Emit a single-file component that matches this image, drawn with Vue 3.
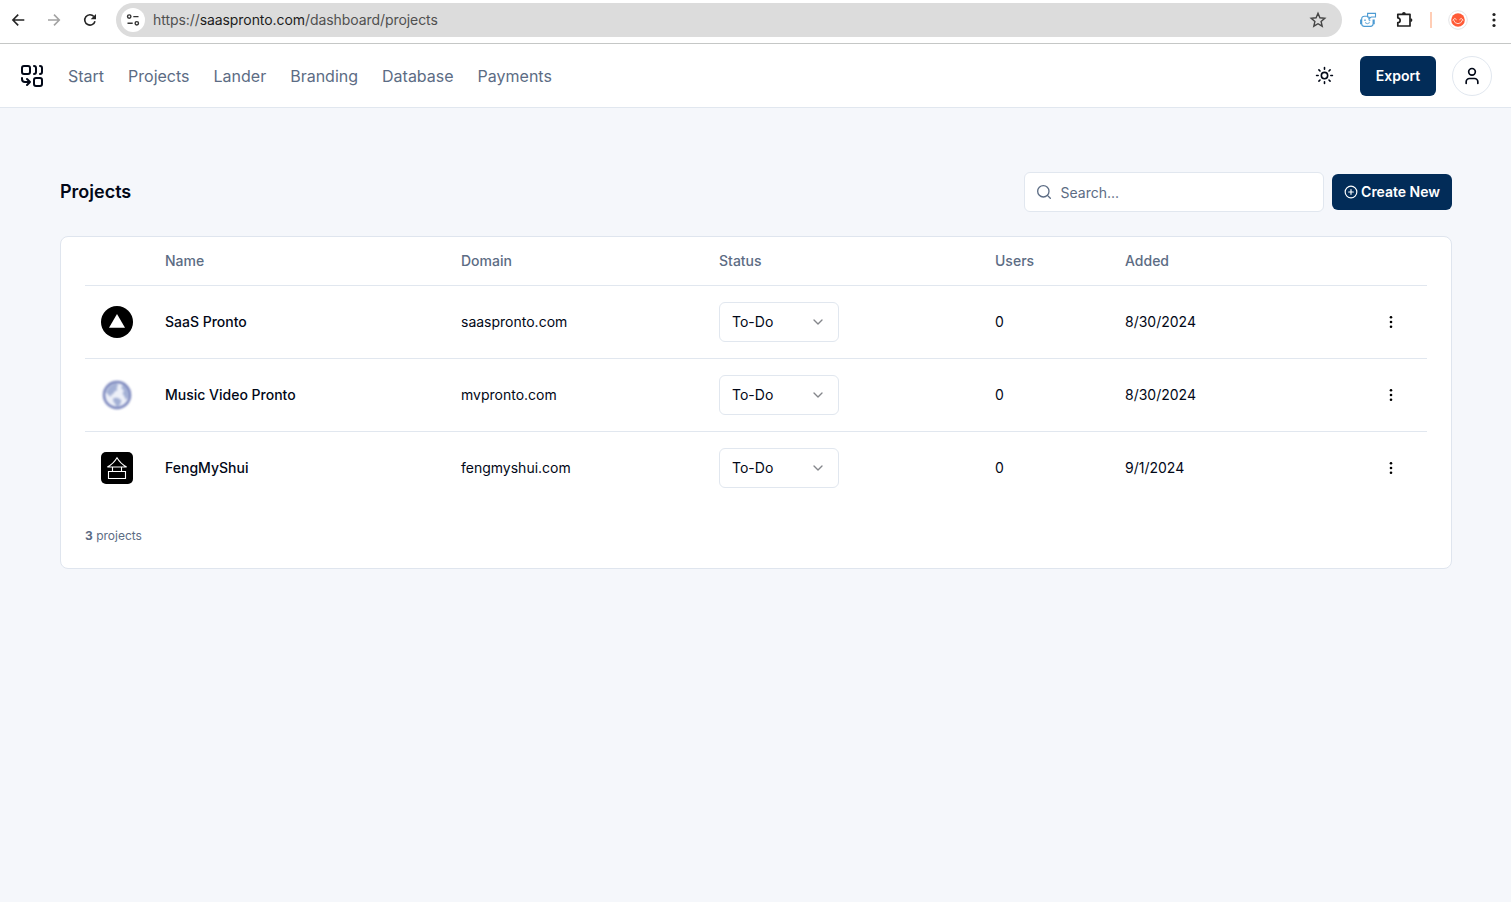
<script setup>
const navItems = ['Start', 'Projects', 'Lander', 'Branding', 'Database', 'Payments']

const projects = [
  { icon: 'triangle', name: 'SaaS Pronto', domain: 'saaspronto.com', status: 'To-Do', users: 0, added: '8/30/2024' },
  { icon: 'globe', name: 'Music Video Pronto', domain: 'mvpronto.com', status: 'To-Do', users: 0, added: '8/30/2024' },
  { icon: 'pagoda', name: 'FengMyShui', domain: 'fengmyshui.com', status: 'To-Do', users: 0, added: '9/1/2024' },
]
</script>

<template>
  <div class="page">
    <div class="browser">
      <div class="controls">
        <svg class="ctl" viewBox="0 0 20 20"><path d="M16.300 10H5M10.200 4.600 4.900 10l5.300 5.400" /></svg>
        <svg class="ctl muted" viewBox="0 0 20 20"><path d="M4 10h11.200M10 4.600l5.300 5.400-5.300 5.400" /></svg>
        <svg class="ctl" viewBox="0 0 20 20">
          <path d="M15 11.200A5.200 5.200 0 1 1 13.900 6.500" />
          <path class="solid" d="M16 4v5.300h-5.300z" />
        </svg>
      </div>
      <div class="address">
        <span class="site-info">
          <svg width="16" height="16" viewBox="0 0 16 16">
            <circle cx="4.200" cy="4.600" r="1.700" /><path d="M8.300 4.600H13.500M2.500 11.300H7.700" /><circle cx="11.800" cy="11.300" r="1.700" />
          </svg>
        </span>
        <span class="url">https://<b>saaspronto.com</b>/dashboard/projects</span>
        <svg class="star" width="18" height="18" viewBox="0 0 18 18">
          <path d="M9 2.300l1.900 4.500 4.900.4-3.700 3.200 1.100 4.800L9 12.700l-4.200 2.500 1.100-4.800-3.700-3.200 4.900-.4z" />
        </svg>
      </div>
      <div class="extensions">
        <svg class="robot" width="18" height="18" viewBox="0 0 18 18">
          <path d="M8.300 5.200H5.300a2.600 2.600 0 0 0-2.600 2.600v5A2.600 2.600 0 0 0 5.300 15.400h6.200a2.600 2.600 0 0 0 2.600-2.600V8.500M2.500 9H1.600v3.600h.9M14.300 9h.9v3.600h-.9M8.600 2.400h7.900v3.600h-4.300L9.900 7.800V6h-1.300z" />
          <path class="face" d="M6 11.600q2.400 2.200 4.800 0" /><circle class="face" cx="6" cy="9.200" r=".5" /><circle class="face" cx="10.600" cy="9.200" r=".5" />
        </svg>
        <svg class="puzzle" width="20" height="20" viewBox="0 0 20 20">
          <path d="M2.800 4.300h12.200v11.700h-12.200v-3.500a2.200 2.200 0 0 0 0-4.700z" />
          <path class="fill" d="M7 4a1.900 1.900 0 0 1 3.800 0zM15.500 8.200a1.900 1.900 0 0 1 0 3.800z" />
        </svg>
        <i class="divider"></i>
        <svg class="profile" width="20" height="20" viewBox="0 0 20 20">
          <circle cx="10" cy="10" r="9.300" fill="#fff" stroke="#e4e4e6" />
          <circle cx="10" cy="10" r="6.800" fill="#ff5a36" />
          <path d="M4.600 10.200L6.800 8.400 8.600 9.800M11.400 9.800l1.800-1.400 2.200 1.800M5.500 10q1.300 3.700 4.500 3.700t4.500-3.700" fill="none" stroke="#ffe5de" stroke-width=".9" />
        </svg>
        <svg class="menu" width="20" height="20" viewBox="0 0 20 20">
          <circle cx="10" cy="4.500" r="1.600" /><circle cx="10" cy="10" r="1.600" /><circle cx="10" cy="15.500" r="1.600" />
        </svg>
      </div>
    </div>

    <header class="navbar">
      <svg class="line logo" width="24" height="24" viewBox="0 0 24 24">
        <path d="M10 18H5a3 3 0 0 1-3-3v-1M14 2a2 2 0 0 1 2 2v4a2 2 0 0 1-2 2M20 2a2 2 0 0 1 2 2v4a2 2 0 0 1-2 2M7 21l3-3-3-3" />
        <rect x="14" y="14" width="8" height="8" rx="2" /><rect x="2" y="2" width="8" height="8" rx="2" />
      </svg>
      <nav>
        <a v-for="item in navItems" :key="item">{{ item }}</a>
      </nav>
      <svg class="line sun" width="19" height="19" viewBox="0 0 24 24">
        <circle cx="12" cy="12" r="4" />
        <path d="M12 2v2M12 20v2M4.930 4.930l1.410 1.410M17.660 17.660l1.410 1.410M2 12h2M20 12h2M6.340 17.660l-1.410 1.410M19.070 4.930l-1.410 1.410" />
      </svg>
      <button class="export">Export</button>
      <button class="avatar">
        <svg class="line" width="20" height="20" viewBox="0 0 24 24">
          <path d="M19 21v-2a4 4 0 0 0-4-4H9a4 4 0 0 0-4 4v2" /><circle cx="12" cy="7" r="4" />
        </svg>
      </button>
    </header>

    <main>
      <div class="toolbar">
        <h1>Projects</h1>
        <label class="search">
          <svg class="line" width="16" height="16" viewBox="0 0 24 24"><circle cx="11" cy="11" r="8.500" /><path d="M21.500 21.500l-4.400-4.400" /></svg>
          <span>Search...</span>
        </label>
        <button class="create">
          <svg class="line" width="14" height="14" viewBox="0 0 24 24"><circle cx="12" cy="12" r="10" /><path d="M8 12h8M12 8v8" /></svg>
          <span>Create New</span>
        </button>
      </div>

      <section class="card">
        <table>
          <thead>
            <tr>
              <th class="c-icon"></th>
              <th class="c-name">Name</th>
              <th class="c-domain">Domain</th>
              <th class="c-status">Status</th>
              <th class="c-users">Users</th>
              <th class="c-added">Added</th>
              <th></th>
            </tr>
          </thead>
          <tbody>
            <tr v-for="p in projects" :key="p.name">
              <td>
                <svg v-if="p.icon === 'triangle'" class="thumb" viewBox="0 0 32 32">
                  <circle cx="16" cy="16" r="16" /><path d="M16 8l8 13.800H8z" fill="#fff" />
                </svg>
                <svg v-else-if="p.icon === 'globe'" class="thumb globe" viewBox="0 0 32 32">
                  <circle cx="16" cy="16" r="13" fill="#edf0f8" stroke="#7480b9" stroke-width="2.400" />
                  <g fill="#a3b0d5">
                    <path d="M8 8q4-4 8-3.500l1 2.200-1.500 2 1 2.300-3 1.500-1.500 2.700-2 .3.500 2-2-.5-3.500-4z" />
                    <path d="M21 6l4 2 3 5-.5 5-2.500 3-1.500-3.500-2-3 1.500-3-2.500-2z" />
                    <path d="M12.500 19l4-.3 4 2.500-1.500 4.500-3 2.500-2.200-4-1.800-2.500z" />
                  </g>
                </svg>
                <svg v-else class="thumb" viewBox="0 0 32 32">
                  <rect width="32" height="32" rx="5" />
                  <path d="M16 5.800q-3.500 6-9.600 9.200h19.200Q19.500 11.800 16 5.800zM11.500 15v4M20.500 15v4M7.500 19.500h17v7h-17z" fill="none" stroke="#fff" stroke-width="1.100" />
                </svg>
              </td>
              <td class="name">{{ p.name }}</td>
              <td>{{ p.domain }}</td>
              <td>
                <div class="select">
                  <span>{{ p.status }}</span>
                  <svg class="line" width="16" height="16" viewBox="0 0 24 24"><path d="M6 9l6 6 6-6" /></svg>
                </div>
              </td>
              <td>{{ p.users }}</td>
              <td>{{ p.added }}</td>
              <td>
                <svg class="dots" width="16" height="16" viewBox="0 0 16 16">
                  <circle cx="8" cy="3.300" r="1.300" /><circle cx="8" cy="8" r="1.300" /><circle cx="8" cy="12.700" r="1.300" />
                </svg>
              </td>
            </tr>
          </tbody>
        </table>
        <p class="count"><strong>{{ projects.length }}</strong> projects</p>
      </section>
    </main>
  </div>
</template>

<style>
body { background: #f5f7fb; }
</style>

<style scoped>
.page { min-height: 902px; background: #f5f7fb; color: #020817; font: 14px/20px Inter, sans-serif; }
.page * { box-sizing: border-box; }
svg { display: block; flex: none; }
button { font: inherit; border: 0; padding: 0; }
.line { fill: none; stroke: currentColor; stroke-width: 2; stroke-linecap: round; stroke-linejoin: round; }

.browser { display: flex; align-items: center; height: 44px; padding: 0 7px 4px 8px; background: #fff; border-bottom: 1px solid #c5c7c6; }
.controls { display: flex; gap: 16px; width: 108px; }
.ctl { width: 20px; height: 20px; fill: none; stroke: #252525; stroke-width: 1.6; }
.ctl.muted { stroke: #a3a3a3; }
.ctl .solid { fill: #252525; stroke: none; }
.address { display: flex; align-items: center; width: 1226px; height: 34px; padding: 0 15px 0 5px; border-radius: 17px; background: #dcdcdc; }
.site-info { display: flex; align-items: center; justify-content: center; width: 24px; height: 24px; border-radius: 50%; background: #fff; }
.site-info svg { fill: none; stroke: #333; stroke-width: 1.4; }
.url { flex: 1; margin-left: 8px; color: #505050; font-size: 14px; letter-spacing: -0.07px; }
.url b { color: #1d1d1d; font-weight: 400; }
.star { fill: none; stroke: #454545; stroke-width: 1.4; }
.extensions { display: flex; align-items: center; margin-left: 17px; }
.robot { fill: none; stroke: #4c9bd3; stroke-width: 1.1; }
.robot .face { stroke-width: 0.9; }
.puzzle { margin-left: 18px; fill: none; stroke: #202020; stroke-width: 1.7; stroke-linejoin: round; }
.puzzle .fill { fill: #202020; stroke: none; }
.divider { width: 2px; height: 16px; margin-left: 15px; background: #ffcdb5; }
.profile { margin-left: 16px; }
.menu { margin-left: 16px; fill: #222; }

.navbar { display: flex; align-items: center; height: 64px; padding: 0 19px 0 20px; background: #fff; border-bottom: 1px solid #e1e7ef; }
nav { display: flex; flex: 1; gap: 24px; margin-left: 24px; color: #5c6c84; font-size: 16px; line-height: 24px; }
.sun { margin-right: 26px; }
.export { width: 76px; height: 40px; border-radius: 6px; background: #022c58; color: #fff; font-weight: 600; }
.avatar { display: flex; align-items: center; justify-content: center; width: 40px; height: 40px; margin-left: 16px; border: 1px solid #e1e7ef; border-radius: 50%; background: #fff; color: #020817; }

main { padding: 64px 59px 0 60px; }
.toolbar { display: flex; align-items: center; height: 40px; }
h1 { flex: 1; margin: 0; font-size: 18px; line-height: 28px; font-weight: 600; }
.search { display: flex; align-items: center; gap: 8.5px; width: 300px; height: 40px; padding: 0 11px; border: 1px solid #e1e7ef; border-radius: 6px; background: #fff; color: #5c6c84; }
.search span { padding-top: 2px; }
.create { display: flex; align-items: center; justify-content: center; gap: 3px; width: 120px; height: 36px; margin-left: 8px; border-radius: 6px; background: #022c58; color: #fff; font-weight: 600; }
.create span { letter-spacing: -0.03px; }

.card { height: 333px; margin-top: 24px; padding: 0 24px; border: 1px solid #dfe5ee; border-radius: 8px; background: #fff; }
table { width: 100%; table-layout: fixed; border-collapse: separate; border-spacing: 0; }
th { height: 49px; padding: 0 16px; border-bottom: 1px solid #e1e7ef; color: #5c6c84; font-weight: 500; text-align: left; }
td { height: 73px; padding: 0 16px; border-bottom: 1px solid #e1e7ef; }
tbody tr:last-child td { height: 72px; border-bottom: 0; }
.c-icon { width: 64px; }
.c-name { width: 296px; }
.c-domain { width: 258px; }
.c-status { width: 276px; }
.c-users { width: 130px; }
.c-added { width: 250px; }
.name { font-weight: 500; }
.thumb { width: 32px; height: 32px; }
.globe { filter: blur(0.8px); }
.select { display: flex; align-items: center; justify-content: space-between; width: 120px; height: 40px; padding: 0 12px; border: 1px solid #e1e7ef; border-radius: 6px; }
.select svg { color: #84868b; }
.dots { margin-left: 8px; }
.count { margin: 24px 0 0; color: #5c6c84; font-size: 12px; line-height: 16px; }
.count strong { font-weight: 700; }
</style>
